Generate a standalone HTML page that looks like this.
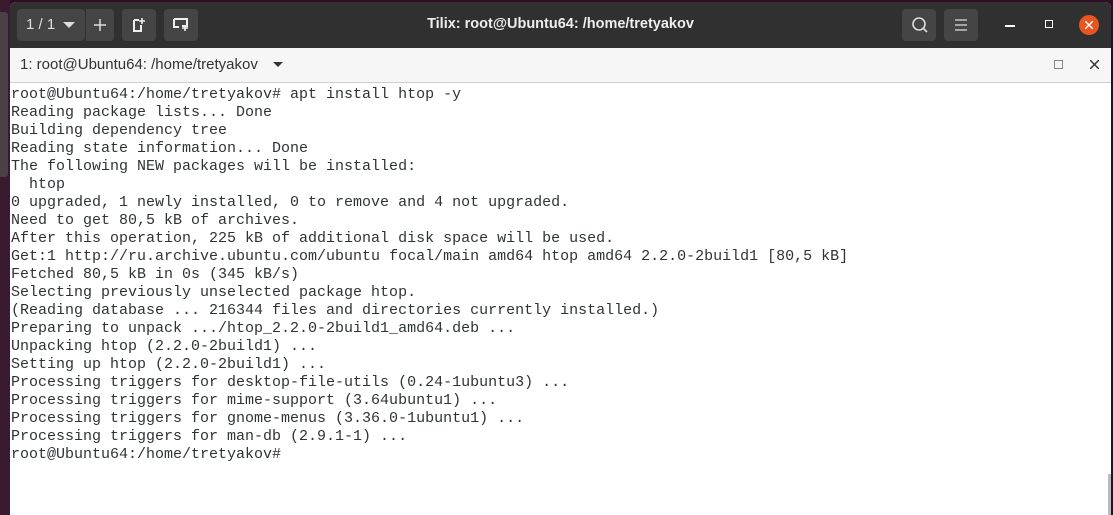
<!DOCTYPE html>
<html><head><style>
body{margin:0;width:1113px;height:515px;overflow:hidden;background:#2c0f22;position:relative;font-family:"Liberation Sans",sans-serif}
#leftbar{position:absolute;left:0;top:0;width:10px;height:515px;background:#3a1a2e}
#leftbar div{position:absolute;left:0;top:12px;width:8px;height:165px;background:#4a4046;border-radius:0 3px 3px 0}
#win{position:absolute;left:10px;top:2px;width:1101px;height:513px;background:#fff;border-radius:6px 6px 0 0;overflow:hidden}
#hdr{height:46px;background:#303030;position:relative;color:#fff}
.btn{position:absolute;top:7px;height:32px;background:#454545;border-radius:4px}
#title{position:absolute;left:0;right:0;top:14px;text-align:center;font-weight:bold;font-size:14.5px;color:#eee}
#tab{height:34px;background:#f6f6f6;border-bottom:1px solid #cfcfcf;position:relative;font-size:15px;color:#333}
#term{position:absolute;top:84px;left:1px;font-family:"Liberation Mono",monospace;font-size:15px;line-height:18px;color:#2e3436;white-space:pre;margin:0}
</style></head><body>
<div id="leftbar"><div></div></div>
<div id="win">
<div id="hdr">
<div class="btn" style="left:7px;width:68px"><span style="position:absolute;left:9px;top:7px;font-size:15px;color:#ddd">1 / 1</span><svg style="position:absolute;left:46px;top:13px" width="12" height="7"><path d="M0 0H12L6 6Z" fill="#ddd"/></svg></div>
<div class="btn" style="left:76px;width:28px;border-radius:0 4px 4px 0"><svg style="position:absolute;left:7px;top:9px" width="14" height="14"><path d="M7 1V13M1 7H13" stroke="#ddd" stroke-width="1.5"/></svg></div>
<div class="btn" style="left:112px;width:34px"><svg style="position:absolute;left:10px;top:8px" width="14" height="16"><path d="M2 3H7M2 3V14H9V8" stroke="#eee" stroke-width="2" fill="none"/><path d="M10 1V7M7 4H13" stroke="#eee" stroke-width="1.6"/></svg></div>
<div class="btn" style="left:154px;width:34px"><svg style="position:absolute;left:9px;top:9px" width="18" height="14"><path d="M1 1H14V8H9M1 1V9H6" stroke="#eee" stroke-width="2" fill="none"/><path d="M12 7V13M9 10H15" stroke="#eee" stroke-width="1.6"/></svg></div>
<div id="title">Tilix: root@Ubuntu64: /home/tretyakov</div>
<div class="btn" style="left:892px;width:34px"><svg style="position:absolute;left:9px;top:7px" width="18" height="18"><circle cx="8" cy="8" r="6" stroke="#ddd" stroke-width="1.6" fill="none"/><path d="M12 12L16 16" stroke="#ddd" stroke-width="1.6"/></svg></div>
<div class="btn" style="left:934px;width:34px"><svg style="position:absolute;left:10px;top:10px" width="14" height="12"><path d="M1 1H13M1 6H13M1 11H13" stroke="#ddd" stroke-width="1.3"/></svg></div>
<div style="position:absolute;left:995px;top:23px;width:10px;height:1.5px;background:#fff"></div>
<div style="position:absolute;left:1035px;top:18px;width:6px;height:6px;border:1.5px solid #fff"></div>
<div style="position:absolute;left:1069px;top:13px;width:20px;height:20px;border-radius:50%;background:#e95420"><svg style="position:absolute;left:6px;top:6px" width="8" height="8"><path d="M0 0L8 8M8 0L0 8" stroke="#fff" stroke-width="1.5"/></svg></div>
</div>
<div id="tab"><span style="position:absolute;left:10px;top:8px">1: root@Ubuntu64: /home/tretyakov</span><svg style="position:absolute;left:263px;top:14px" width="10" height="6"><path d="M0 0H10L5 5Z" fill="#333"/></svg>
<div style="position:absolute;left:1044px;top:12px;width:7px;height:7px;border:1px solid #888"></div>
<svg style="position:absolute;left:1080px;top:12px" width="9" height="9"><path d="M0 0L9 9M9 0L0 9" stroke="#333" stroke-width="1.5"/></svg>
</div>
<pre id="term">root@Ubuntu64:/home/tretyakov# apt install htop -y
Reading package lists... Done
Building dependency tree
Reading state information... Done
The following NEW packages will be installed:
  htop
0 upgraded, 1 newly installed, 0 to remove and 4 not upgraded.
Need to get 80,5 kB of archives.
After this operation, 225 kB of additional disk space will be used.
Get:1 http://ru.archive.ubuntu.com/ubuntu focal/main amd64 htop amd64 2.2.0-2build1 [80,5 kB]
Fetched 80,5 kB in 0s (345 kB/s)
Selecting previously unselected package htop.
(Reading database ... 216344 files and directories currently installed.)
Preparing to unpack .../htop_2.2.0-2build1_amd64.deb ...
Unpacking htop (2.2.0-2build1) ...
Setting up htop (2.2.0-2build1) ...
Processing triggers for desktop-file-utils (0.24-1ubuntu3) ...
Processing triggers for mime-support (3.64ubuntu1) ...
Processing triggers for gnome-menus (3.36.0-1ubuntu1) ...
Processing triggers for man-db (2.9.1-1) ...
root@Ubuntu64:/home/tretyakov#</pre>
<div style="position:absolute;left:1098px;top:472px;width:3px;height:41px;background:#bbb"></div>
</div>
</body></html>
